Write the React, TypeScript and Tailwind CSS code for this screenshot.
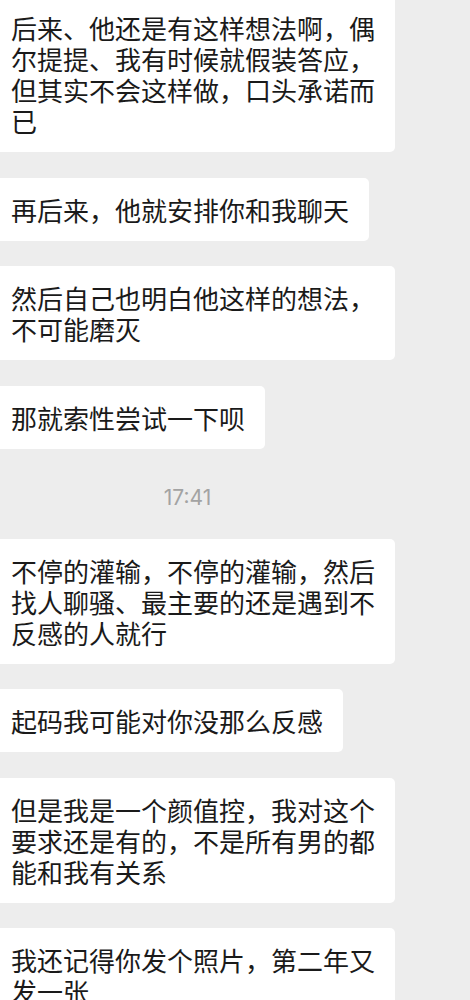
const messages = [
  "后来、他还是有这样想法啊，偶尔提提、我有时候就假装答应，但其实不会这样做，口头承诺而已",
  "再后来，他就安排你和我聊天",
  "然后自己也明白他这样的想法，不可能磨灭",
  "那就索性尝试一下呗",
];

const laterMessages = [
  "不停的灌输，不停的灌输，然后找人聊骚、最主要的还是遇到不反感的人就行",
  "起码我可能对你没那么反感",
  "但是我是一个颜值控，我对这个要求还是有的，不是所有男的都能和我有关系",
  "我还记得你发个照片，第二年又发一张",
];

const Bubble = ({ text, first }: { text: string; first?: boolean }) => (
  <div
    className={`self-start max-w-[395px] bg-white rounded-r-[5px] pl-[11px] pr-[20px] py-4 text-[26px] leading-[31px] text-[#1a1a1a] ${
      first ? "-mt-1" : ""
    }`}
  >
    {text}
  </div>
);

const App = () => {
  return (
    <div
      className="bg-[#ededed] min-h-screen w-full overflow-hidden flex flex-col gap-[25.5px]"
      style={{ fontFamily: '"Noto Sans CJK SC", "Noto Sans", sans-serif' }}
    >
      {messages.map((m, i) => (
        <Bubble key={m} text={m} first={i === 0} />
      ))}

      <div className="w-[375px] h-[39px] pt-[12px] text-center text-[21px] leading-[24px] text-[#a3a3a3] font-['Inter',sans-serif]">
        17:41
      </div>

      {laterMessages.map((m) => (
        <Bubble key={m} text={m} />
      ))}
    </div>
  );
};

export default App;
